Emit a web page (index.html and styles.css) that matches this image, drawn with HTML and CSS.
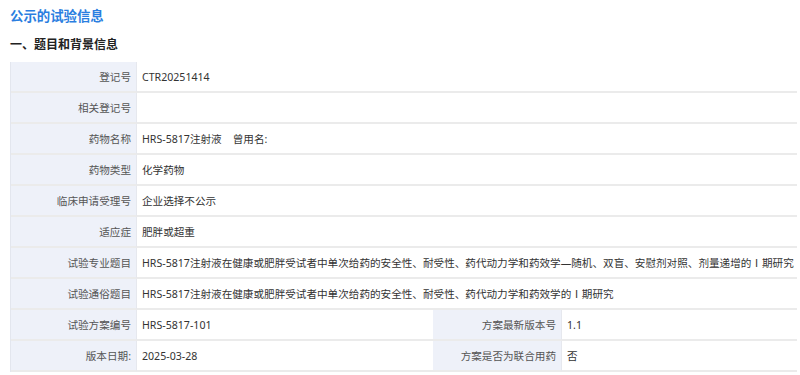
FILE: index.html
```html
<!DOCTYPE html>
<html lang="zh-CN">
<head>
<meta charset="utf-8">
<title>公示的试验信息</title>
<link rel="stylesheet" href="styles.css">
</head>
<body>
<div class="page">
  <h1 class="title">公示的试验信息</h1>
  <h2 class="section">一、题目和背景信息</h2>
  <table class="info">
    <colgroup>
      <col class="c-label">
      <col class="c-value">
      <col class="c-label2">
      <col>
    </colgroup>
    <tr><th>登记号</th><td colspan="3">CTR20251414</td></tr>
    <tr><th>相关登记号</th><td colspan="3"></td></tr>
    <tr><th>药物名称</th><td colspan="3">HRS-5817注射液&nbsp;&nbsp;&nbsp;&nbsp;曾用名:</td></tr>
    <tr><th>药物类型</th><td colspan="3">化学药物</td></tr>
    <tr><th>临床申请受理号</th><td colspan="3">企业选择不公示</td></tr>
    <tr><th>适应症</th><td colspan="3">肥胖或超重</td></tr>
    <tr><th>试验专业题目</th><td colspan="3">HRS-5817注射液在健康或肥胖受试者中单次给药的安全性、耐受性、药代动力学和药效学—随机、双盲、安慰剂对照、剂量递增的Ⅰ期研究</td></tr>
    <tr><th>试验通俗题目</th><td colspan="3">HRS-5817注射液在健康或肥胖受试者中单次给药的安全性、耐受性、药代动力学和药效学的Ⅰ期研究</td></tr>
    <tr><th>试验方案编号</th><td>HRS-5817-101</td><th>方案最新版本号</th><td>1.1</td></tr>
    <tr><th>版本日期:</th><td>2025-03-28</td><th>方案是否为联合用药</th><td>否</td></tr>
  </table>
</div>
</body>
</html>
```
FILE: styles.css
```css
html, body {
  margin: 0;
  padding: 0;
  background: #ffffff;
}
body {
  font-family: "Noto Sans", "Noto Sans CJK SC", sans-serif;
  color: #333333;
}
.page {
  padding: 0 3px 0 10px;
}
.title {
  margin: 0;
  padding-top: 7px;
  height: 20px;
  line-height: 18px;
  font-size: 13.4px;
  font-weight: bold;
  color: #2a7ee0;
}
.section {
  margin: 0;
  padding-top: 9px;
  height: 35px;
  line-height: 18px;
  font-size: 12px;
  font-weight: bold;
  color: #222222;
  box-sizing: border-box;
}
.info {
  width: 100%;
  border-collapse: separate;
  border-spacing: 0;
  table-layout: fixed;
  font-size: 10.6px;
  border-left: 1px solid #e3e6ee;
}
.c-label { width: 126px; }
.c-value { width: 296px; }
.c-label2 { width: 129px; }
.info th, .info td {
  height: 31px;
  box-sizing: border-box;
  border-bottom: 2px solid #ebebeb;
  white-space: nowrap;
  vertical-align: middle;
  font-weight: normal;
}
.info th {
  background: #eef1f9;
  color: #555555;
  text-align: right;
  padding: 0 5px 0 4px;
  border-right: 1px solid #e6e8ee;
}
.info td {
  background: #ffffff;
  color: #333333;
  text-align: left;
  padding: 0 4px 0 5px;
}
```
